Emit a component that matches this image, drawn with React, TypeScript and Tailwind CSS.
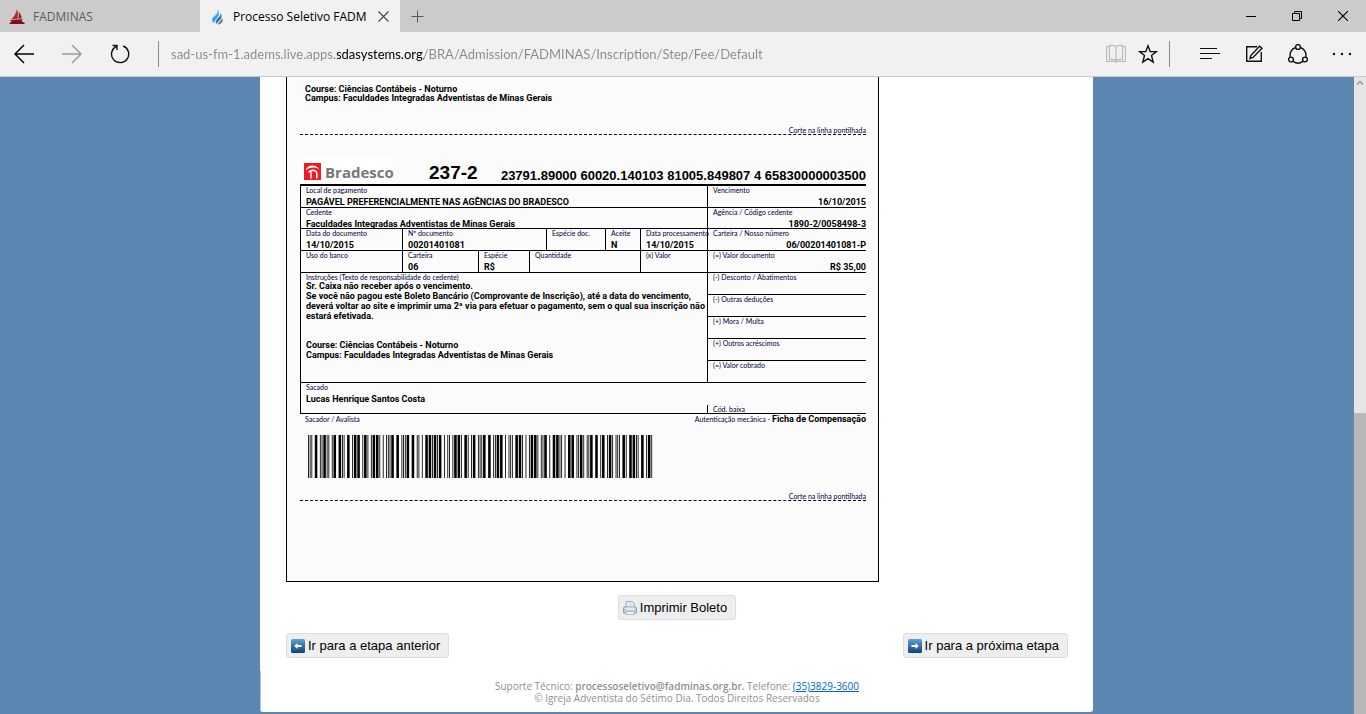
import React from "react";

const BARCODE_DIGITS = "23794" + "65830000003500" + "18900" + "6002014010" + "8100584980";

const PATTERNS = [
  "nnwwn", "wnnnw", "nwnnw", "wwnnn", "nnwnw",
  "wnwnn", "nwwnn", "nnnww", "wnnwn", "nwnwn",
];

function interleavedBars(digits: string) {
  const bars: { x: number; w: number }[] = [];
  let x = 0;
  const put = (bar: string, space: string) => {
    const w = bar === "w" ? 3 : 1;
    bars.push({ x, w });
    x += w + (space === "w" ? 3 : 1);
  };
  put("n", "n");
  put("n", "n");
  for (let i = 0; i < digits.length; i += 2) {
    const a = PATTERNS[Number(digits[i])];
    const b = PATTERNS[Number(digits[i + 1])];
    for (let k = 0; k < 5; k++) put(a[k], b[k]);
  }
  put("w", "n");
  put("n", "n");
  return { bars, total: x };
}

function Barcode() {
  const { bars, total } = interleavedBars(BARCODE_DIGITS);
  return (
    <svg
      role="img"
      aria-label="Código de barras"
      className="block h-[43px] w-[345px] bg-white"
      viewBox={`0 0 ${total} 43`}
      preserveAspectRatio="none"
    >
      {bars.map((b) => (
        <rect key={b.x} x={b.x} y="0" width={b.w} height="43" fill="#000" />
      ))}
    </svg>
  );
}

function ShipIcon() {
  return (
    <svg className="size-4 shrink-0" viewBox="0 0 16 16" aria-hidden="true">
      <path d="M7.6 0.4C9 2.5 9.3 5.5 8.6 9.7L2.3 10.2C5.2 7.6 7 4.5 7.6 0.4Z" fill="#b3272d" />
      <path d="M9.5 2.6C11.3 4.6 12.5 6.8 12.8 9.4L9.4 9.7C9.9 7.2 9.9 4.9 9.5 2.6Z" fill="#a01c22" />
      <path d="M1 10.9L13.6 10.2L12.6 12.3L15.8 13.9L15.4 15H0.3L1.2 13.4L2.9 12.5Z" fill="#7d1218" />
    </svg>
  );
}

function FlameIcon() {
  return (
    <svg className="size-4 shrink-0" viewBox="0 0 16 16" aria-hidden="true">
      <path d="M8.7 0.5C9.2 3.5 7 4.7 4.6 7.2C2.6 9.3 2.7 12 5 14.5C5.4 11 9.3 8.8 9.9 5.5C10.2 3.6 9.8 1.8 8.7 0.5Z" fill="#35a3dc" />
      <path d="M11.6 4C12 7 9.3 8.6 7.5 10.9C6.5 12.3 6.5 13.8 7.4 15.3C8 12.6 12.2 11.2 12.6 7.8C12.7 6.3 12.3 5 11.6 4Z" fill="#1c78b8" />
      <path d="M13 9C13 11.3 9.6 12.2 8.7 15.5C11.5 15.3 13.8 13.7 13.8 11.2C13.8 10.3 13.5 9.6 13 9Z" fill="#777d84" />
      <path d="M4.2 8C5.5 6.5 8 5.2 8.7 3" fill="none" stroke="#b9e4f8" strokeWidth="1.1" />
    </svg>
  );
}

function Tabs() {
  return (
    <div className="flex h-8 bg-[#cbcbcb] text-[12px] leading-4">
      <button className="flex w-[200px] items-center gap-2 pt-0.5 pl-[9px] text-[#5c5c5c]">
        <ShipIcon />
        FADMINAS
      </button>
      <div className="flex w-[200px] items-center bg-[#f1f1f1] pl-[9px]">
        <button className="flex flex-1 items-center gap-2 pt-0.5 text-black">
          <FlameIcon />
          <span className="whitespace-nowrap">Processo Seletivo FADM</span>
        </button>
        <button aria-label="Fechar guia" className="flex w-[36px] items-center justify-center">
          <svg className="size-[11px]" viewBox="0 0 11 11" fill="none" stroke="#444" strokeWidth="1.1">
            <path d="M0.5 0.5L10.5 10.5M10.5 0.5L0.5 10.5" />
          </svg>
        </button>
      </div>
      <button aria-label="Nova guia" className="flex w-[34px] items-center justify-center">
        <svg className="size-[13px]" viewBox="0 0 13 13" fill="none" stroke="#5a5a5a">
          <path d="M6.5 0.5V12.5M0.5 6.5H12.5" />
        </svg>
      </button>
      <div className="ml-auto flex">
        <button aria-label="Minimizar" className="flex w-[46px] items-center justify-center">
          <svg className="size-[10px]" viewBox="0 0 10 10" stroke="#000" fill="none">
            <path d="M0 5.5H10" />
          </svg>
        </button>
        <button aria-label="Restaurar" className="flex w-[46px] items-center justify-center">
          <svg className="size-[10px]" viewBox="0 0 10 10" stroke="#000" fill="none">
            <path d="M0.5 2.5H7.5V9.5H0.5ZM2.5 2.5V0.5H9.5V7.5H7.5" />
          </svg>
        </button>
        <button aria-label="Fechar" className="flex w-[46px] items-center justify-center">
          <svg className="size-[10px]" viewBox="0 0 10 10" stroke="#000" fill="none" strokeWidth="1.1">
            <path d="M0 0L10 10M10 0L0 10" />
          </svg>
        </button>
      </div>
    </div>
  );
}

function Toolbar() {
  return (
    <div className="box-content flex h-11 items-center border-b border-[#c8c8c8] bg-[#f1f1f1]">
      <button aria-label="Voltar" className="flex w-12 justify-center">
        <svg className="size-5" viewBox="0 0 20 20" fill="none" stroke="#000" strokeWidth="1.5">
          <path d="M20 10H1M10 1L1 10L10 19" />
        </svg>
      </button>
      <button aria-label="Avançar" className="flex w-12 justify-center">
        <svg className="size-5" viewBox="0 0 20 20" fill="none" stroke="#9b9b9b" strokeWidth="1.5">
          <path d="M0 10H19M10 1L19 10L10 19" />
        </svg>
      </button>
      <button aria-label="Atualizar" className="flex w-12 justify-center">
        <svg className="size-5" viewBox="0 0 20 20" fill="none" stroke="#111" strokeWidth="1.4">
          <path d="M13.2 2A8.6 8.6 0 1 1 6.3 2.3M2.5 1.5H7V6" />
        </svg>
      </button>
      <div className="ml-3.5 h-[26px] w-px bg-[#8c8c8c]" />
      <input
        aria-label="Endereço"
        className="ml-3 min-w-0 flex-1 bg-[linear-gradient(90deg,#8a8a8a_166px,#000_166px,#000_253px,#8a8a8a_253px)] bg-clip-text font-['Lato','Open_Sans',sans-serif] text-[13px] leading-5 text-transparent outline-none"
        defaultValue="sad-us-fm-1.adems.live.apps.sdasystems.org/BRA/Admission/FADMINAS/Inscription/Step/Fee/Default"
      />
      <button aria-label="Modo de leitura" className="flex w-8 justify-center">
        <svg className="size-5" viewBox="0 0 20 20" fill="none" stroke="#bdbdbd" strokeWidth="1.2">
          <path d="M3.5 2.5H0.6V17.4H9L10 18.4L11 17.4H19.4V2.5H16.5" />
          <path d="M10 2.5C8.5 1.5 5.5 1.2 3.5 1.5V15.5C5.5 15.2 8.5 15.5 10 16.5C11.5 15.5 14.5 15.2 16.5 15.5V1.5C14.5 1.2 11.5 1.5 10 2.5ZM10 2.5V16.5" />
        </svg>
      </button>
      <button aria-label="Favoritos" className="flex w-8 justify-center">
        <svg className="size-5" viewBox="0 0 20 20" fill="none" stroke="#111" strokeWidth="1.4">
          <path d="M10 1.8L12.2 7.5L18.3 7.7L13.5 11.5L15.2 18.2L10 14.6L4.8 18.2L6.5 11.5L1.7 7.7L7.8 7.5Z" />
        </svg>
      </button>
      <div className="ml-[5px] h-[26px] w-px bg-[#8c8c8c]" />
      <div className="mr-0.5 ml-[18px] flex">
        <button aria-label="Hub" className="flex w-11 justify-center">
          <svg className="size-5" viewBox="0 0 20 20" fill="none" stroke="#111" strokeWidth="1.2">
            <path d="M0 4.5H17M0 9.5H20M0 14.5H12" />
          </svg>
        </button>
        <button aria-label="Anotação na Web" className="flex w-11 justify-center">
          <svg className="size-5" viewBox="0 0 20 20" fill="none" stroke="#111" strokeWidth="1.4">
            <path d="M13 2.7H2.7V17.3H17.3V8" />
            <path d="M6 14.5L6.8 11.5L15.5 2.2L18 4.3L9 13.5Z" />
          </svg>
        </button>
        <button aria-label="Compartilhar" className="flex w-11 justify-center">
          <svg className="size-5" viewBox="0 0 20 20" fill="none" stroke="#111" strokeWidth="1.4">
            <circle cx="10" cy="3" r="2.4" />
            <circle cx="3" cy="15.5" r="2.4" />
            <circle cx="17" cy="15.5" r="2.4" />
            <path d="M7.6 3.5A8 8 0 0 0 2.3 13M12.4 3.5A8 8 0 0 1 17.7 13M5.2 17.4A8 8 0 0 0 14.8 17.4" />
          </svg>
        </button>
        <button aria-label="Mais ações" className="flex w-11 justify-center">
          <svg className="size-5" viewBox="0 0 20 20" fill="#111">
            <circle cx="2" cy="10" r="1.2" />
            <circle cx="10" cy="10" r="1.2" />
            <circle cx="18" cy="10" r="1.2" />
          </svg>
        </button>
      </div>
    </div>
  );
}

const SMALL = "font-['Lato','Liberation_Sans',sans-serif] text-[7px] font-normal text-[#000040]";
const LABEL = `${SMALL} h-[10px] leading-2 whitespace-nowrap`;
const VALUE = "h-[10px] text-[9px] leading-3 font-bold text-black whitespace-nowrap";
const CELL = "border-b border-l border-black p-0 pl-[5px] align-top text-left";

function Field({ label, value = "", span = 1, right = false }: { label: string; value?: string; span?: number; right?: boolean }) {
  return (
    <td colSpan={span} className={CELL}>
      <div className={LABEL}>{label}</div>
      {value && <div className={`${VALUE} ${right ? "text-right" : ""}`}>{value}</div>}
    </td>
  );
}

function CutLine() {
  return (
    <div className={`${SMALL} h-[10px] border-b border-dashed border-black text-right leading-[10px]`}>
      Corte na linha pontilhada
    </div>
  );
}

function BradescoLogo() {
  return (
    <div className="flex h-[26px] w-[90px] items-center gap-1 bg-white pl-px">
      <svg className="size-[17px] shrink-0" viewBox="0 0 17 17" aria-hidden="true">
        <rect width="17" height="17" fill="#ec1c24" />
        <path d="M1.5 7.5C3 1.5 12 0.8 15.5 6.5C11 3.6 5.5 4 1.5 7.5Z" fill="#fff" />
        <path d="M4.5 9.2C8 6.2 12.6 7 12.8 10.5V15.5M7 15.5V8" fill="none" stroke="#fff" strokeWidth="1.5" />
      </svg>
      <span className="pt-0.5 font-['Open_Sans',sans-serif] text-[15px] leading-5 font-bold text-[#777]">Bradesco</span>
    </div>
  );
}

const DEDUCTIONS = ["(-) Outras deduções", "(+) Mora / Multa", "(+) Outros acréscimos", "(=) Valor cobrado"];

function Slip() {
  return (
    <section className="w-[593px] border-x border-b border-black bg-[#fbfbfb] pt-2 pr-3 pb-20 pl-[13px] font-['Roboto','Liberation_Sans',sans-serif]">
      <div className="pl-[5px] text-[9px] leading-[9px] font-bold">
        <p>Course: Ciências Contábeis - Noturno</p>
        <p>Campus: Faculdades Integradas Adventistas de Minas Gerais</p>
      </div>
      <div className="pt-[22px]">
        <CutLine />
      </div>
      <div className="flex h-[49px] items-end pl-[3px] font-['Liberation_Sans',Arial,sans-serif] font-bold">
        <BradescoLogo />
        <span className="ml-9 text-[19px] leading-[22px]">237-2</span>
        <span className="ml-auto text-[13px] leading-4">23791.89000 60020.140103 81005.849807 4 65830000003500</span>
      </div>
      <table className="w-full table-fixed border-separate border-spacing-0 border-t-2 border-black">
        <colgroup>
          <col className="w-[102px]" />
          <col className="w-[76px]" />
          <col className="w-[51px]" />
          <col className="w-[17px]" />
          <col className="w-[59px]" />
          <col className="w-[35px]" />
          <col className="w-[67px]" />
          <col className="w-[159px]" />
        </colgroup>
        <tbody>
          <tr className="h-[22px]">
            <Field label="Local de pagamento" value="PAGÁVEL PREFERENCIALMENTE NAS AGÊNCIAS DO BRADESCO" span={7} />
            <Field label="Vencimento" value="16/10/2015" right />
          </tr>
          <tr className="h-[21px]">
            <Field label="Cedente" value="Faculdades Integradas Adventistas de Minas Gerais" span={7} />
            <Field label="Agência / Código cedente" value="1890-2/0058498-3" right />
          </tr>
          <tr className="h-[22px]">
            <Field label="Data do documento" value="14/10/2015" />
            <Field label="Nº documento" value="00201401081" span={3} />
            <Field label="Espécie doc." />
            <Field label="Aceite" value="N" />
            <Field label="Data processamento" value="14/10/2015" />
            <Field label="Carteira / Nosso número" value="06/00201401081-P" right />
          </tr>
          <tr className="h-[22px]">
            <Field label="Uso do banco" />
            <Field label="Carteira" value="06" />
            <Field label="Espécie" value="R$" />
            <Field label="Quantidade" span={3} />
            <Field label="(x) Valor" />
            <Field label="(=) Valor documento" value="R$ 35,00" right />
          </tr>
          <tr className="h-[22px]">
            <td colSpan={7} rowSpan={5} className={CELL}>
              <div className={LABEL}>Instruções (Texto de responsabilidade do cedente)</div>
              <div className="-mt-0.5 text-[9px] leading-[10px] font-bold whitespace-nowrap">
                <p>Sr. Caixa não receber após o vencimento.</p>
                <p>Se você não pagou este Boleto Bancário (Comprovante de Inscrição), até a data do vencimento,</p>
                <p>deverá voltar ao site e imprimir uma 2ª via para efetuar o pagamento, sem o qual sua inscrição não</p>
                <p>estará efetivada.</p>
                <p className="mt-[19px]">Course: Ciências Contábeis - Noturno</p>
                <p>Campus: Faculdades Integradas Adventistas de Minas Gerais</p>
              </div>
            </td>
            <Field label="(-) Desconto / Abatimentos" />
          </tr>
          {DEDUCTIONS.map((d) => (
            <tr key={d} className="h-[22px]">
              <Field label={d} />
            </tr>
          ))}
          <tr className="h-[31px]">
            <td colSpan={7} className={CELL}>
              <div className={LABEL}>Sacado</div>
              <div className={VALUE}>Lucas Henrique Santos Costa</div>
            </td>
            <td className="border-b border-black p-0 align-bottom">
              <div className={`${SMALL} border-l border-black pl-[5px] leading-2`}>Cód. baixa</div>
            </td>
          </tr>
        </tbody>
      </table>
      <div className={`${SMALL} flex justify-between pl-[5px] leading-[10px]`}>
        <span>Sacador / Avalista</span>
        <span>
          Autenticação mecânica -{" "}
          <b className="font-['Roboto','Liberation_Sans',sans-serif] text-[9px] text-black">Ficha de Compensação</b>
        </span>
      </div>
      <div className="mt-[11px] mb-[13px] pl-2">
        <Barcode />
      </div>
      <CutLine />
    </section>
  );
}

const BUTTON = "flex h-[25px] items-center gap-[3px] rounded-[3px] border border-[#dcdcdc] bg-[#eee] pr-2 pl-1 text-[13px] leading-4 text-black";

function ArrowIcon({ flip = false }: { flip?: boolean }) {
  return (
    <svg className="size-[14px]" viewBox="0 0 14 14" aria-hidden="true">
      <defs>
        <linearGradient id="arrowFill" x1="0" y1="0" x2="0" y2="1">
          <stop offset="0" stopColor="#5ba3d6" />
          <stop offset="1" stopColor="#0f4474" />
        </linearGradient>
      </defs>
      <rect width="14" height="14" rx="1.5" fill="url(#arrowFill)" />
      <path
        d={flip ? "M10.8 7L7.5 4V6H3.5V8H7.5V10Z" : "M3.2 7L6.5 4V6H10.5V8H6.5V10Z"}
        fill="#fff"
      />
    </svg>
  );
}

function PrinterIcon() {
  return (
    <svg className="size-[14px]" viewBox="0 0 14 14" aria-hidden="true">
      <path d="M3 7V0.5H9.5L11.3 2.5V7Z" fill="#d9ebfb" stroke="#7fa9d4" strokeWidth="0.8" />
      <rect x="0.5" y="6" width="13" height="6.3" rx="1.2" fill="#c9ccd0" stroke="#85898f" strokeWidth="0.8" />
      <path d="M2.5 6.5H11.5V8.5H2.5Z" fill="#eef0f2" />
      <path d="M2.8 10.5H11.2V13.5H2.8Z" fill="#eaf3fc" stroke="#8fb1d6" strokeWidth="0.7" />
    </svg>
  );
}

export default function App() {
  return (
    <div className="flex min-h-screen flex-col bg-[#5c87b2] font-['Liberation_Sans',Arial,sans-serif] text-black">
      <header className="font-['Open_Sans','Noto_Sans',sans-serif]">
        <Tabs />
        <Toolbar />
      </header>
      <div className="flex flex-1">
        <main className="flex-1 pr-px pb-0.5">
          <div className="mx-auto w-[833px] overflow-hidden rounded-b-[3px] bg-white">
            <div className="flex flex-col pr-[25px] pb-[13px] pl-[26px]">
              <Slip />
              <button className={`${BUTTON} mt-[13px] self-center`}>
                <PrinterIcon />
                Imprimir Boleto
              </button>
              <div className="mt-[13px] flex justify-between">
                <button className={BUTTON}>
                  <ArrowIcon />
                  Ir para a etapa anterior
                </button>
                <button className={BUTTON}>
                  <ArrowIcon flip />
                  Ir para a próxima etapa
                </button>
              </div>
            </div>
            <footer className="border-l border-[#a9c3de] pt-[9px] pb-2 text-center font-['Open_Sans','Noto_Sans',sans-serif] text-[10px] leading-3 text-[#8f8f8f]">
              <p>
                Suporte Técnico: <b className="font-semibold">processoseletivo@fadminas.org.br.</b> Telefone:{" "}
                <a href="tel:+553538293600" className="text-[#0066cc] underline">(35)3829-3600</a>
              </p>
              <p>© Igreja Adventista do Sétimo Dia. Todos Direitos Reservados</p>
            </footer>
          </div>
        </main>
        <div className="flex w-3 flex-col bg-[#e5e5e5]" aria-hidden="true">
          <div className="flex flex-[336_1_0%] justify-center">
            <svg className="mt-0.5 size-2" viewBox="0 0 8 8" fill="none" stroke="#999" strokeWidth="1.4">
              <path d="M1 5.5L4 2.5L7 5.5" />
            </svg>
          </div>
          <div className="flex-[301_1_0%] bg-[#b8b8b8]" />
        </div>
      </div>
    </div>
  );
}
